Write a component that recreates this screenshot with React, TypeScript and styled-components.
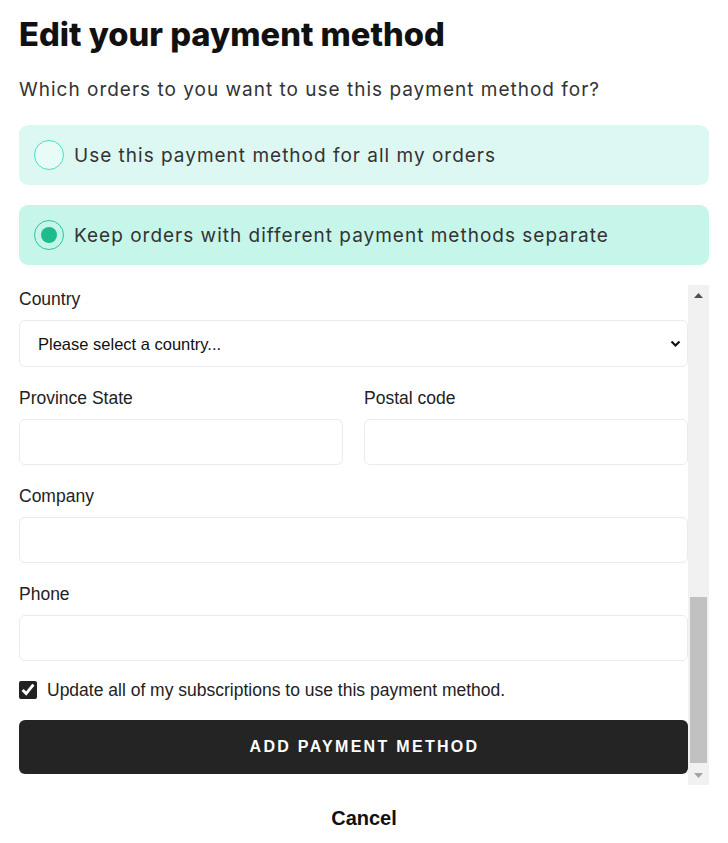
import React, { useState } from "react";
import styled, { createGlobalStyle } from "styled-components";

const GlobalStyle = createGlobalStyle`
  html, body { margin: 0; padding: 0; background: #ffffff; }
  * { box-sizing: border-box; }
`;

const Page = styled.div`
  width: 728px;
  padding: 0 19px;
  font-family: "Liberation Sans", Arial, sans-serif;
  color: #222;
`;

const Title = styled.h1`
  margin: 0;
  padding-top: 15px;
  font-family: Inter, "Noto Sans", sans-serif;
  font-weight: 800;
  font-size: 32.7px;
  line-height: 38px;
  color: #111;
`;

const Subtitle = styled.p`
  margin: 24px 0 22px;
  font-family: Inter, "Noto Sans", sans-serif;
  font-weight: 400;
  font-size: 19px;
  line-height: 26px;
  letter-spacing: 1px;
  color: #333;
`;

const OptionList = styled.div`
  display: flex;
  flex-direction: column;
  gap: 20px;
`;

const OptionCard = styled.label<{ $selected?: boolean }>`
  display: flex;
  align-items: center;
  gap: 10px;
  height: 60px;
  padding-left: 15px;
  border-radius: 9px;
  background: ${(p) => (p.$selected ? "#c6f5ea" : "#ddf8f2")};
  cursor: pointer;
`;

const RadioCircle = styled.span<{ $checked?: boolean }>`
  display: flex;
  align-items: center;
  justify-content: center;
  width: 30px;
  height: 30px;
  border-radius: 50%;
  border: 1.5px solid ${(p) => (p.$checked ? "#2ec39c" : "#46e0c3")};
  background: ${(p) => (p.$checked ? "transparent" : "#e8fbf7")};

  &::after {
    content: "";
    display: ${(p) => (p.$checked ? "block" : "none")};
    width: 16px;
    height: 16px;
    border-radius: 50%;
    background: #1ebb8f;
  }
`;

const OptionText = styled.span`
  font-family: Inter, "Noto Sans", sans-serif;
  font-size: 19px;
  letter-spacing: 1px;
  color: #333;
`;

const ScrollFrame = styled.div`
  display: flex;
  margin-top: 20px;
  height: 500px;
`;

const FormColumn = styled.form`
  flex: 1;
  min-width: 0;
  display: flex;
  flex-direction: column;
  padding-top: 4px;
  overflow: hidden;
`;

const ScrollTrack = styled.div`
  width: 21px;
  flex: none;
  display: flex;
  flex-direction: column;
  background: #f1f1f1;
`;

const ScrollButton = styled.div`
  height: 20px;
  flex: none;
  display: flex;
  align-items: center;
  justify-content: center;
`;

const ThumbRail = styled.div`
  flex: 1;
  display: flex;
  flex-direction: column;
  justify-content: flex-end;
  padding: 0 2px 2px;
`;

const Thumb = styled.div`
  height: 166px;
  background: #c1c1c1;
`;

const FieldRow = styled.div`
  display: grid;
  grid-template-columns: 1fr 1fr;
  column-gap: 21px;
`;

const Field = styled.div`
  display: flex;
  flex-direction: column;
  margin-bottom: 21px;
  min-width: 0;
`;

const Label = styled.label`
  font-size: 17.5px;
  line-height: 20px;
  margin-bottom: 11px;
  color: #222;
`;

const TextInput = styled.input`
  height: 46px;
  width: 100%;
  border: 1px solid #ebebeb;
  border-radius: 6px;
  padding: 0 18px;
  font-family: "Liberation Sans", Arial, sans-serif;
  font-size: 16px;
  color: #222;
  background: #fff;
  outline: none;
`;

const SelectWrap = styled.div`
  position: relative;
`;

const Select = styled.select`
  appearance: none;
  -webkit-appearance: none;
  height: 47px;
  width: 100%;
  border: 1px solid #ebebeb;
  border-radius: 6px;
  padding: 0 18px;
  font-family: "Liberation Sans", Arial, sans-serif;
  font-size: 16.5px;
  color: #111;
  background: #fff;
  outline: none;
`;

const Chevron = styled.svg`
  position: absolute;
  right: 7px;
  top: 20px;
  pointer-events: none;
`;

const CheckRow = styled.label`
  display: flex;
  align-items: center;
  gap: 10px;
  height: 20px;
  margin: -2px 0 20px;
  font-size: 17.5px;
  color: #222;
`;

const CheckBox = styled.input`
  margin: 0;
  width: 18px;
  height: 18px;
  accent-color: #222;
`;

const SubmitButton = styled.button`
  height: 54px;
  width: 100%;
  flex: none;
  border: none;
  border-radius: 6px;
  padding: 0 0 0 22px;
  background: #242424;
  color: #fff;
  font-family: "Liberation Sans", Arial, sans-serif;
  font-weight: 700;
  font-size: 16px;
  letter-spacing: 2.3px;
  text-transform: uppercase;
`;

const CancelButton = styled.button`
  display: block;
  margin: 19px auto 0;
  border: none;
  background: none;
  font-family: "Liberation Sans", Arial, sans-serif;
  font-weight: 700;
  font-size: 20px;
  line-height: 26px;
  color: #111;
`;

export default function App() {
  const [choice, setChoice] = useState<"all" | "separate">("separate");

  return (
    <>
      <GlobalStyle />
      <Page>
        <Title>Edit your payment method</Title>
        <Subtitle>Which orders to you want to use this payment method for?</Subtitle>
        <OptionList>
          <OptionCard $selected={choice === "all"} onClick={() => setChoice("all")}>
            <RadioCircle $checked={choice === "all"} />
            <OptionText>Use this payment method for all my orders</OptionText>
          </OptionCard>
          <OptionCard $selected={choice === "separate"} onClick={() => setChoice("separate")}>
            <RadioCircle $checked={choice === "separate"} />
            <OptionText>Keep orders with different payment methods separate</OptionText>
          </OptionCard>
        </OptionList>

        <ScrollFrame>
          <FormColumn onSubmit={(e) => e.preventDefault()}>
            <Field>
              <Label>Country</Label>
              <SelectWrap>
                <Select defaultValue="">
                  <option value="">Please select a country...</option>
                </Select>
                <Chevron width="11" height="8" viewBox="0 0 11 8">
                  <path d="M1.5 1.5 L5.5 5.5 L9.5 1.5" fill="none" stroke="#111" strokeWidth="2.2" />
                </Chevron>
              </SelectWrap>
            </Field>
            <FieldRow>
              <Field>
                <Label>Province State</Label>
                <TextInput />
              </Field>
              <Field>
                <Label>Postal code</Label>
                <TextInput />
              </Field>
            </FieldRow>
            <Field>
              <Label>Company</Label>
              <TextInput />
            </Field>
            <Field>
              <Label>Phone</Label>
              <TextInput />
            </Field>
            <CheckRow>
              <CheckBox type="checkbox" defaultChecked />
              Update all of my subscriptions to use this payment method.
            </CheckRow>
            <SubmitButton type="submit">Add payment method</SubmitButton>
          </FormColumn>
          <ScrollTrack aria-hidden="true">
            <ScrollButton>
              <svg width="9" height="5" viewBox="0 0 9 5">
                <polygon points="0,5 4.5,0 9,5" fill="#505050" />
              </svg>
            </ScrollButton>
            <ThumbRail>
              <Thumb />
            </ThumbRail>
            <ScrollButton>
              <svg width="9" height="5" viewBox="0 0 9 5">
                <polygon points="0,0 9,0 4.5,5" fill="#a3a3a3" />
              </svg>
            </ScrollButton>
          </ScrollTrack>
        </ScrollFrame>
        <CancelButton type="button">Cancel</CancelButton>
      </Page>
    </>
  );
}
